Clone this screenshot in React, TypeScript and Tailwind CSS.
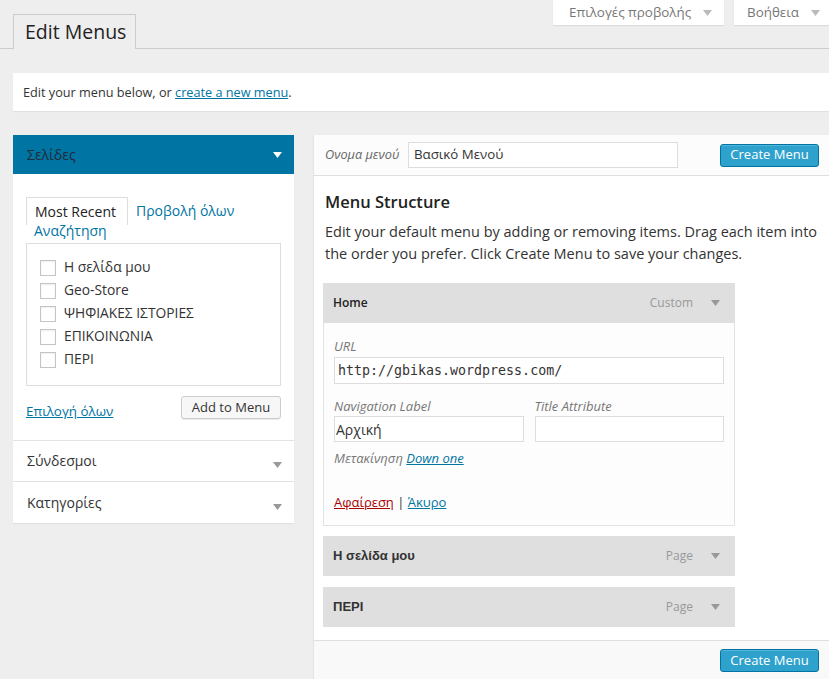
import React from "react";

const Arrow = ({ color = "#999" }: { color?: string }) => (
  <svg width="9" height="6" viewBox="0 0 9 6" className="shrink-0">
    <polygon points="0,0 9,0 4.5,6" fill={color} />
  </svg>
);

const Checkbox = () => (
  <span className="w-[16px] h-[16px] border border-[#c4c4c4] bg-white shadow-[inset_0_1px_2px_rgba(0,0,0,0.07)] shrink-0" />
);

export default function App() {
  const pages = ["Η σελίδα μου", "Geo-Store", "ΨΗΦΙΑΚΕΣ ΙΣΤΟΡΙΕΣ", "ΕΠΙΚΟΙΝΩΝΙΑ", "ΠΕΡΙ"];
  return (
    <div className="w-[829px] h-[679px] overflow-hidden bg-[#eeeeee] text-[#333] font-['Open_Sans',sans-serif]">
      {/* top */}
      <div className="flex justify-between items-start h-[49px] border-b border-[#cccccc]">
        <div className="ml-[13px] mt-[14px] h-[35px] w-[123px] pl-[11px] border border-b-0 border-[#cccccc] bg-[#eeeeee] text-[19.5px] leading-[33px] text-[#222]">
          Edit Menus
        </div>
        <div className="flex gap-[10px] mr-[-15px] shrink-0">
          <div className="w-[171px] h-[25px] bg-white shadow-[0_1px_1px_rgba(0,0,0,0.08)] flex items-center pl-[16px] gap-[12px] text-[13.4px] text-[#777]">
            <span>Επιλογές προβολής</span>
            <Arrow color="#bbb" />
          </div>
          <div className="w-[110px] h-[25px] bg-white shadow-[0_1px_1px_rgba(0,0,0,0.08)] flex items-center pl-[13px] gap-[12px] text-[13.4px] text-[#777]">
            <span>Βοήθεια</span>
            <Arrow color="#bbb" />
          </div>
        </div>
      </div>

      {/* notice */}
      <div className="ml-[13px] mt-[24px] h-[38px] bg-white shadow-[0_1px_1px_rgba(0,0,0,0.06)] flex items-center pl-[10px] text-[12.7px] text-[#333]">
        <span className="mt-[1px]">
          Edit your menu below, or{" "}
          <span className="text-[#0074a2] underline">create a new menu</span>.
        </span>
      </div>

      {/* columns */}
      <div className="flex items-start mt-[24px] ml-[13px] gap-[19px]">
        {/* left */}
        <div className="w-[281px] shrink-0 bg-white shadow-[0_1px_1px_rgba(0,0,0,0.06)]">
          <div className="h-[39px] bg-[#0074a2] flex items-center justify-between pl-[14px] pr-[12px] text-[14px] text-[#1e2b38]">
            <span>Σελίδες</span>
            <Arrow color="#ffffff" />
          </div>
          <div className="px-[13px] pt-[23px] pb-[21px]">
            <div className="flex items-start h-[26px]">
              <div className="w-[102px] h-[28px] border border-b-0 border-[#dddddd] pl-[8px] text-[14px] leading-[27px] text-[#222]">
                Most Recent
              </div>
              <span className="ml-[8px] text-[14px] leading-[27px] text-[#0074a2]">Προβολή όλων</span>
            </div>
            <div className="pl-[8px] text-[14px] leading-[16px] text-[#0074a2]">Αναζήτηση</div>
            <div className="mt-[4px] h-[143px] border border-[#dddddd] pl-[13px] pt-[12px]">
              {pages.map((p) => (
                <div key={p} className="h-[23px] flex items-center gap-[8px] text-[13.8px] text-[#333]">
                  <Checkbox />
                  <span>{p}</span>
                </div>
              ))}
            </div>
            <div className="flex justify-between items-end mt-[10px]">
              <span className="text-[13.4px] leading-[16px] text-[#0074a2] underline">Επιλογή όλων</span>
              <div className="w-[100px] h-[23px] border border-[#cccccc] rounded-[3px] bg-[#f7f7f7] shadow-[0_1px_0_rgba(0,0,0,0.08)] flex items-center justify-center text-[13px] text-[#333]">
                Add to Menu
              </div>
            </div>
          </div>
          <div className="h-[41px] border-t border-[#e3e3e3] flex items-center justify-between pl-[14px] pr-[12px] text-[14px] text-[#333]">
            <span className="mb-[1px]">Σύνδεσμοι</span>
            <span className="mt-[8px]"><Arrow color="#999" /></span>
          </div>
          <div className="h-[42px] border-t border-[#e3e3e3] flex items-center justify-between pl-[14px] pr-[12px] text-[14px] text-[#333]">
            <span className="mb-[1px]">Κατηγορίες</span>
            <span className="mt-[8px]"><Arrow color="#999" /></span>
          </div>
        </div>

        {/* right */}
        <div className="flex-1 bg-white border-l border-[#e5e5e5] shadow-[0_1px_1px_rgba(0,0,0,0.06)]">
          <div className="h-[41px] bg-[#fcfcfc] border-b border-[#dfdfdf] flex items-center pl-[11px] pr-[10px]">
            <span className="italic text-[12.7px] text-[#666] w-[83px]">Ονομα μενού</span>
            <div className="w-[270px] h-[26px] border border-[#dddddd] bg-white flex items-center pl-[5px] text-[13.3px] text-[#333]">
              Βασικό Μενού
            </div>
            <div className="ml-auto w-[99px] h-[23px] rounded-[3px] bg-[#2ea2cc] border border-[#0074a2] shadow-[inset_0_1px_0_rgba(120,200,230,0.5)] flex items-center justify-center text-[13px] text-white">
              Create Menu
            </div>
          </div>
          <div className="pl-[9px] pr-[10px] pt-[15px] pb-[13px]">
            <div className="pl-[2px] text-[16.5px] leading-[22px] font-semibold text-[#222]">Menu Structure</div>
            <p className="pl-[2px] mt-[8px] text-[14.5px] leading-[22px] text-[#333] whitespace-nowrap">
              Edit your default menu by adding or removing items. Drag each item into
              <br />
              the order you prefer. Click Create Menu to save your changes.
            </p>
            <div className="w-[412px] mt-[18px]">
              <div className="h-[40px] bg-[#dfdfdf] flex items-center pl-[10px] pr-[15px] text-[12px]">
                <span className="font-semibold text-[#222]">Home</span>
                <span className="ml-auto text-[#999] mr-[18px]">Custom</span>
                <Arrow color="#999" />
              </div>
              <div className="h-[203px] border border-t-0 border-[#e3e3e3] bg-[#fdfdfd] px-[10px] pt-[14px]">
                <div className="italic text-[13px] leading-[18px] text-[#777]">URL</div>
                <div className="mt-[2px] h-[27px] border border-[#dddddd] bg-white flex items-center pl-[3px] font-['DejaVu_Sans_Mono',monospace] text-[13.3px] text-[#333]">
                  http://gbikas.wordpress.com/
                </div>
                <div className="flex gap-[11px] mt-[13px]">
                  <div className="flex-1">
                    <div className="italic text-[13px] leading-[18px] text-[#777]">Navigation Label</div>
                    <div className="mt-[1px] h-[26px] border border-[#dddddd] bg-white flex items-center pl-[1px] text-[14px] text-[#333]">
                      Αρχική
                    </div>
                  </div>
                  <div className="flex-1">
                    <div className="italic text-[13px] leading-[18px] text-[#777]">Title Attribute</div>
                    <div className="mt-[1px] h-[26px] border border-[#dddddd] bg-white" />
                  </div>
                </div>
                <div className="mt-[7px] text-[13px] leading-[18px]">
                  <span className="italic text-[#777]">Μετακίνηση</span>{" "}
                  <span className="italic text-[#0074a2] underline">Down one</span>
                </div>
                <div className="mt-[26px] text-[13px] leading-[18px]">
                  <span className="text-[#a00] underline">Αφαίρεση</span>
                  <span className="text-[#333]"> | </span>
                  <span className="text-[#0074a2] underline">Άκυρο</span>
                </div>
              </div>
              <div className="mt-[10px] h-[40px] bg-[#dfdfdf] flex items-center pl-[10px] pr-[15px] text-[12px]">
                <span className="font-bold font-['Liberation_Sans',sans-serif] text-[13px] text-[#333]">Η σελίδα μου</span>
                <span className="ml-auto text-[#999] mr-[18px]">Page</span>
                <Arrow color="#999" />
              </div>
              <div className="mt-[11px] h-[40px] bg-[#dfdfdf] flex items-center pl-[10px] pr-[15px] text-[12px]">
                <span className="font-bold font-['Liberation_Sans',sans-serif] text-[13px] text-[#333]">ΠΕΡΙ</span>
                <span className="ml-auto text-[#999] mr-[18px]">Page</span>
                <Arrow color="#999" />
              </div>
            </div>
          </div>
          <div className="h-[40px] border-t border-[#dfdfdf] bg-[#f9f9f9] flex items-start justify-end pr-[10px] pt-[8px]">
            <div className="w-[99px] h-[23px] rounded-[3px] bg-[#2ea2cc] border border-[#0074a2] shadow-[inset_0_1px_0_rgba(120,200,230,0.5)] flex items-center justify-center text-[13px] text-white">
              Create Menu
            </div>
          </div>
        </div>
      </div>
    </div>
  );
}
